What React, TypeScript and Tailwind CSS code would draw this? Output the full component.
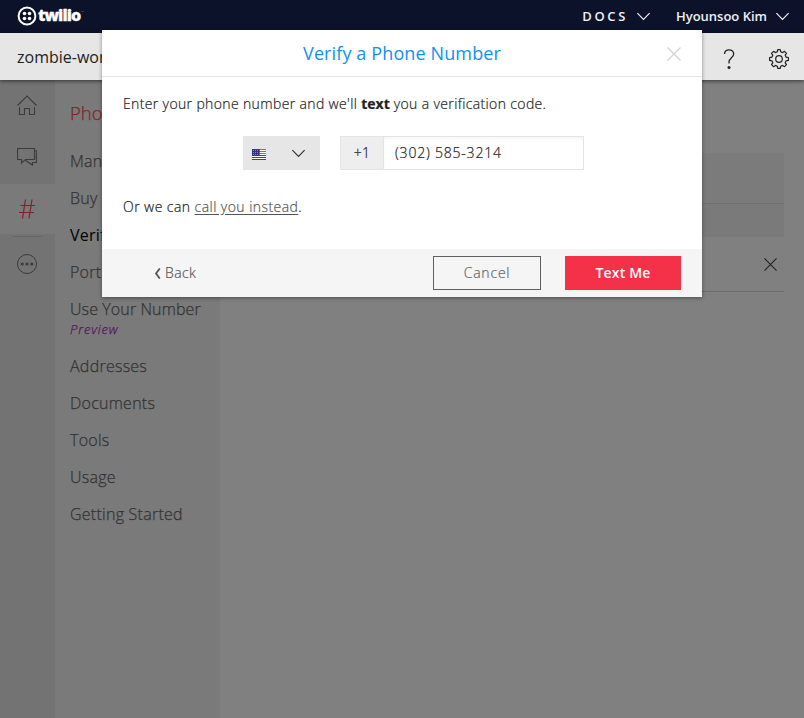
import type { ReactNode } from "react";

function Chevron({ className }: { className: string }) {
  return (
    <svg viewBox="0 0 16 10" className={className} fill="none" stroke="currentColor" strokeWidth="1.300">
      <path d="M1.200 1.200 8 8.200l6.800-7" />
    </svg>
  );
}

function Cross({ className }: { className: string }) {
  return (
    <svg viewBox="0 0 14 14" className={className} fill="none" stroke="currentColor" strokeWidth="1.200">
      <path d="M.5.5l13 13M13.500.5l-13 13" />
    </svg>
  );
}

function Logo() {
  return (
    <div className="flex items-center text-white">
      <svg viewBox="0 0 20 20" className="-mt-0.5 h-5 w-5">
        <circle cx="10" cy="10" r="8.400" fill="none" stroke="currentColor" strokeWidth="2" />
        <g fill="currentColor">
          <circle cx="7.500" cy="7.500" r="1.800" />
          <circle cx="12.500" cy="7.500" r="1.800" />
          <circle cx="7.500" cy="12.500" r="1.800" />
          <circle cx="12.500" cy="12.500" r="1.800" />
        </g>
      </svg>
      <span className="-mt-1 ml-px text-[16px] leading-5 font-extrabold tracking-[-0.9px] [-webkit-text-stroke:0.3px_white]">twilio</span>
      <span className="-mt-2 ml-px text-[3px] leading-none text-[#8a8d9c]">™</span>
    </div>
  );
}

function FlagUS() {
  return (
    <svg viewBox="0 0 14 11" className="mt-[3px] h-[11px] w-[14px]" shapeRendering="crispEdges">
      <rect width="14" height="11" fill="#fff" />
      {[0, 2, 4, 6, 8, 10].map((y) => (
        <rect key={y} y={y} width="14" height="1" fill={y < 6 ? "#e04a5c" : "#c8102e"} />
      ))}
      <rect width="8" height="7" fill="#35357f" />
      {[1, 3, 5].map((y) =>
        [1, 3, 5, 7].map((x) => <rect key={`${x}-${y}`} x={x} y={y} width="1" height="1" fill="#8080bb" />),
      )}
    </svg>
  );
}

function RailItem({ active, children }: { active?: boolean; children: ReactNode }) {
  return (
    <div className={`flex w-full items-center justify-center pr-px ${active ? "h-[50px] bg-[#7a7a7a] text-[#8c1d28]" : "h-[52px] text-[#3c3c3e]"}`}>
      {children}
    </div>
  );
}

function Rail() {
  return (
    <nav className="flex w-[55px] shrink-0 flex-col items-center bg-[#737373]">
      <RailItem>
        <svg viewBox="0 0 20 20" className="-mt-[3px] h-5 w-5" fill="none" stroke="currentColor" strokeWidth="1.100">
          <path d="M.5 10.500 10 1l9.500 9.500M2.500 12v7.500h5v-6h5v6h5V12" />
        </svg>
      </RailItem>
      <RailItem>
        <svg viewBox="0 0 20 18" className="-mt-[3px] h-[18px] w-5" fill="none" stroke="currentColor" strokeWidth="1.200">
          <path d="M.5.5h17v11H8.500L4.500 15v-3.500h-4zM17.500 3h2v11.500h-4v2.500l-7-4.500" />
        </svg>
      </RailItem>
      <RailItem active>
        <svg viewBox="0 0 16 20" className="h-5 w-4" fill="none" stroke="currentColor" strokeWidth="1.200">
          <path d="M6.500.5l-3 19M13 .5l-3 19M1.500 6.500H16M0 13.500h15" />
        </svg>
      </RailItem>
      <hr className="mt-0.5 w-[31px] border-[#666]" />
      <svg viewBox="0 0 20 20" className="mt-[17px] mr-px h-5 w-5 text-[#3c3c3e]" fill="none" stroke="currentColor">
        <circle cx="10" cy="10" r="9.500" />
        <g fill="currentColor" stroke="none">
          <circle cx="5.200" cy="10" r="1.600" />
          <circle cx="10" cy="10" r="1.600" />
          <circle cx="14.800" cy="10" r="1.600" />
        </g>
      </svg>
    </nav>
  );
}

const LINKS = [
  { label: "Man" },
  { label: "Buy" },
  { label: "Verif", active: true },
  { label: "Port" },
  { label: "Use Your Number", note: "Preview" },
  { label: "Addresses" },
  { label: "Documents" },
  { label: "Tools" },
  { label: "Usage" },
  { label: "Getting Started" },
];

function Sidebar() {
  return (
    <aside className="w-[165px] shrink-0 overflow-hidden bg-[#7a7a7a] pt-[19px] pl-[15px] whitespace-nowrap">
      <h1 className="text-[18.500px] leading-7 font-light text-[#8c1d28] [-webkit-text-stroke:0.25px]">Pho</h1>
      <ul className="mt-4 text-[16px] text-[#333]">
        {LINKS.map((l) => (
          <li key={l.label} className={l.note ? "h-[57px]" : "h-[37px]"}>
            <div
              className={`leading-[37px] ${l.active ? "font-medium text-black" : "font-light [-webkit-text-stroke:0.25px]"} ${l.note ? "tracking-[0.100px]" : "tracking-[0.250px]"}`}
            >
              {l.label}
            </div>
            {l.note && (
              <div className="-mt-[7px] text-[13px] leading-4 font-light tracking-[0.850px] text-[#54155c] italic [-webkit-text-stroke:0.25px]">{l.note}</div>
            )}
          </li>
        ))}
      </ul>
    </aside>
  );
}

function Content() {
  return (
    <main className="flex-1 bg-[#808080] pr-5 pl-5">
      <div className="mt-[73px] h-[51px] border-b border-[#717171] bg-[#7b7b7b]" />
      <div className="h-[33px] bg-[#7a7a7a]" />
      <div className="flex h-[55px] items-center justify-end border-b border-[#6c6c6c] pr-[7px] text-[#222]">
        <Cross className="h-[13px] w-[13px]" />
      </div>
    </main>
  );
}

function Dialog() {
  return (
    <section className="absolute top-[30px] left-[102px] z-20 flex h-[267px] w-[600px] flex-col bg-white shadow-[0_1px_4px_rgba(0,0,0,0.400)]">
      <header className="relative flex h-[47px] items-center justify-center border-b border-[#e4e4e4]">
        <h2 className="text-[18px] font-normal tracking-[0.120px] text-[#1290f0]">Verify a Phone Number</h2>
        <Cross className="absolute top-[17px] right-[21px] h-[14px] w-[14px] text-[#d0d0d0]" />
      </header>
      <div className="flex-1 px-[21px] pt-[17px] text-[14px] leading-5 font-light tracking-[0.360px] text-[#222] [-webkit-text-stroke:0.2px]">
        <p>
          Enter your phone number and we'll <b className="font-bold tracking-normal">text</b> you a verification code.
        </p>
        <div className="mt-[22px] ml-[120px] flex h-[34px]">
          <div className="flex w-[77px] items-center justify-between bg-[#e6e6e6] pr-3.5 pl-[9px] text-[#333]">
            <FlagUS />
            <Chevron className="h-[9px] w-[15px]" />
          </div>
          <div className="ml-5 flex w-[244px] items-center border border-[#e4e4e4]">
            <span className="flex h-full w-[43px] items-center justify-center border-r border-[#e4e4e4] bg-[#eee]">+1</span>
            <span className="flex h-full flex-1 items-center pl-[11px] tracking-[0.790px] shadow-[inset_0_2px_3px_rgba(0,0,0,0.040)]">(302) 585-3214</span>
          </div>
        </div>
        <p className="mt-[27px] tracking-[0.440px]">
          Or we can <a className="text-[#555] underline underline-offset-2">call you instead</a>.
        </p>
      </div>
      <footer className="flex h-12 items-center bg-[#f5f5f5] pr-[21px] pl-[52px] text-[14px] font-light tracking-[0.400px] text-[#555] [-webkit-text-stroke:0.2px]">
        <svg viewBox="0 0 7 11" className="h-[11px] w-[7px]" fill="none" stroke="currentColor" strokeWidth="1.800">
          <path d="M5.800.5 2 5.500l3.800 5" />
        </svg>
        <span className="-mt-px ml-1">Back</span>
        <button className="ml-auto h-[34px] w-[108px] border border-[#606060] pb-px tracking-[0.800px] text-[#666]">Cancel</button>
        <button className="ml-6 h-[34px] w-[116px] bg-[#f53049] pb-px font-semibold tracking-[0.200px] text-white [-webkit-text-stroke:0px]">Text Me</button>
      </footer>
    </section>
  );
}

export default function App() {
  return (
    <div className="relative flex h-[718px] w-[804px] flex-col overflow-hidden bg-[#808080] font-['Open_Sans','Noto_Sans',sans-serif]">
      <header className="flex h-[33px] shrink-0 items-center bg-[#0d122b] pr-3.5 pl-[17px] text-[13px] text-[#f0f0f0]">
        <Logo />
        <span className="ml-auto font-semibold tracking-[2.600px]">DOCS</span>
        <Chevron className="ml-2 h-[9px] w-[15px]" />
        <span className="ml-[25px] font-semibold">Hyounsoo Kim</span>
        <Chevron className="ml-2 h-[9px] w-[15px]" />
      </header>
      <div className="z-10 flex h-[47px] shrink-0 items-center bg-[#e6e6e6] pr-[15px] pl-[17px] text-[#222] shadow-[0_1px_4px_rgba(0,0,0,0.600)]">
        <span className="text-[16px]">zombie-wor</span>
        <svg viewBox="0 0 12 20" className="mt-1 ml-auto h-5 w-3" fill="none" stroke="currentColor" strokeWidth="1.300">
          <path d="M1.500 5C1.500 2.500 3.200.8 6 .8S10.700 2.500 10.700 5C10.700 8.500 6 9 6 13v1.500" />
          <circle cx="6" cy="18.500" r="1.500" fill="currentColor" stroke="none" />
        </svg>
        <svg viewBox="0 0 20 20" className="mt-1 ml-[34px] h-5 w-5" fill="none" stroke="currentColor" strokeWidth="1.200" strokeLinejoin="round">
          <path d="M8.300 2.800 8.700.6h2.600l.4 2.200 1.900.8L15.500 2.300l2 2-1.300 1.900.8 1.900 2.400.5v2.800l-2.400.5-.8 1.900 1.300 1.900-2 2-1.900-1.300-1.900.8-.4 2.200H8.700l-.4-2.200-1.900-.8-1.900 1.300-2-2 1.300-1.900-.8-1.900-2.400-.5V8.600L3 8.100l.8-1.900-1.300-1.900 2-2 1.900 1.300z" />
          <circle cx="10" cy="10" r="3.300" />
        </svg>
      </div>
      <div className="flex flex-1">
        <Rail />
        <Sidebar />
        <Content />
      </div>
      <Dialog />
    </div>
  );
}
